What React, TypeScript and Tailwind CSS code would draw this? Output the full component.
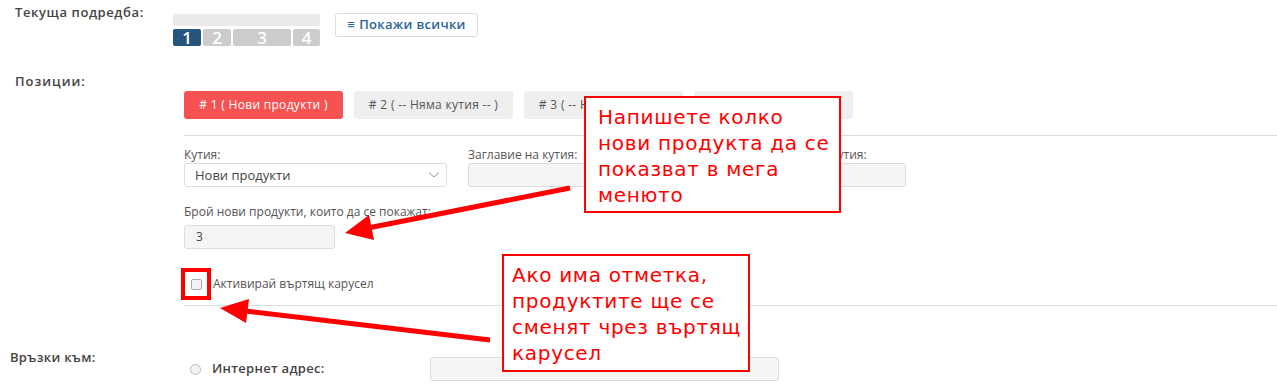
import React from "react";

const tabs = [
  "# 1 ( Нови продукти )",
  "# 2 ( -- Няма кутия -- )",
  "# 3 ( -- Няма кутия -- )",
  "# 4 ( -- Няма кутия -- )",
];

const App = () => {
  return (
    <div className="relative w-[1277px] h-[388px] overflow-hidden bg-white font-['Open_Sans',sans-serif] text-[#444]">
      {/* current layout */}
      <div className="flex pt-[3px] pl-[15px] h-[60px]">
        <div className="w-[158px] text-[13px] font-semibold tracking-[0.6px] leading-[18px]">
          Текуща подредба:
        </div>
        <div className="mt-[11px] w-[147px]">
          <div className="h-[12px] bg-[#ebebeb]" />
          <div className="mt-[3px] flex gap-[2px] h-[17px] text-white text-[17px] leading-[17px] font-semibold">
            <div className="w-[28px] bg-[#26547c] rounded-[2px] flex items-center justify-center">1</div>
            <div className="w-[28px] bg-[#cccccc] rounded-[2px] flex items-center justify-center">2</div>
            <div className="w-[58px] bg-[#cccccc] rounded-[2px] flex items-center justify-center">3</div>
            <div className="w-[27px] bg-[#cccccc] rounded-[2px] flex items-center justify-center">4</div>
          </div>
        </div>
        <button className="ml-[15px] mt-[10px] h-[24px] w-[143px] border border-[#dddddd] rounded-[3px] text-[13px] font-semibold tracking-[0.3px] text-[#2a6496] flex items-center justify-center">
          <span className="font-normal mr-[4px]">≡</span>Покажи всички
        </button>
      </div>

      {/* positions */}
      <div className="flex pl-[15px] mt-[12px]">
        <div className="w-[169px] text-[13px] font-semibold tracking-[1px] leading-[18px]">
          Позиции:
        </div>
        <div className="flex-1 pt-[19px]">
          <div className="flex gap-[11px]">
            {tabs.map((t, i) => (
              <div
                key={t}
                className={
                  i === 0
                    ? "w-[159px] h-[28px] rounded-[3px] bg-[#f65252] text-white text-[12px] tracking-[0.3px] flex items-center justify-center"
                    : "w-[159px] h-[28px] rounded-[3px] bg-[#efefef] text-[#555] text-[12px] tracking-[0.3px] flex items-center justify-center"
                }
              >
                {t}
              </div>
            ))}
          </div>
          <div className="mt-[16px] border-t border-[#dddddd]" />

          <div className="mt-[11px] flex text-[12px] leading-[16px] text-[#555]">
            <div className="w-[284px]">
              <div>Кутия:</div>
              <div className="w-[263px] h-[24px] border border-[#dddddd] rounded-[3px] flex items-center justify-between pl-[10px] pr-[6px] text-[13px] text-[#444]">
                <span>Нови продукти</span>
                <svg width="12" height="8" viewBox="0 0 12 8">
                  <path d="M1 1.5 L6 6 L11 1.5" fill="none" stroke="#999" strokeWidth="1" />
                </svg>
              </div>
            </div>
            <div className="w-[284px]">
              <div>Заглавие на кутия:</div>
              <div className="w-[263px] h-[24px] border border-[#dddddd] rounded-[3px] bg-[#f5f5f5]" />
            </div>
            <div className="w-[284px]">
              <div>Описание на кутия:</div>
              <div className="w-[154px] h-[24px] border border-[#dddddd] rounded-[3px] bg-[#f5f5f5]" />
            </div>
          </div>

          <div className="mt-[17px] text-[12px] leading-[16px] text-[#555]">
            Брой нови продукти, които да се покажат:
          </div>
          <div className="mt-[5px] w-[151px] h-[24px] border border-[#dddddd] rounded-[3px] bg-[#f5f5f5] flex items-center pl-[11px] text-[12px] text-[#444]">
            3
          </div>

          <div className="mt-[19px] flex items-center h-[32px]">
            <div className="-ml-[3px] w-[30px] h-[32px] border-[4px] border-[#ff0000] flex items-center justify-center">
              <div className="w-[11px] h-[11px] border border-[#aaa] rounded-[2px] bg-[#f3f3f3]" />
            </div>
            <span className="ml-[2px] text-[12px] text-[#555]">Активирай въртящ карусел</span>
          </div>
          <div className="mt-[5px] border-t border-[#dddddd]" />
        </div>
      </div>

      {/* links */}
      <div className="flex pl-[10px] mt-[42px]">
        <div className="w-[175px] text-[13px] font-semibold tracking-[0.3px] leading-[18px]">
          Връзки към:
        </div>
        <div className="flex items-center mt-[9px]">
          <div className="ml-[5px] w-[11px] h-[11px] rounded-full border border-[#bbb] bg-[#f3f3f3]" />
          <div className="ml-[11px] w-[218px] text-[13px] font-semibold tracking-[0.3px]">Интернет адрес:</div>
          <div className="w-[349px] h-[24px] border border-[#dddddd] rounded-[3px] bg-[#f5f5f5]" />
        </div>
      </div>

      {/* annotations */}
      <svg className="absolute left-0 top-0 pointer-events-none" width="1277" height="388">
        <line x1="570" y1="188" x2="368" y2="228" stroke="#ff0000" strokeWidth="5" />
        <polygon points="345,233 369,215 374,240" fill="#ff0000" />
        <line x1="490" y1="340" x2="245" y2="311" stroke="#ff0000" strokeWidth="5" />
        <polygon points="220,308 249,299 246,323" fill="#ff0000" />
      </svg>

      <div className="absolute left-[584px] top-[96px] w-[257px] h-[117px] border-2 border-[#ff0000] bg-white pl-[12px] pt-[6px] font-['DejaVu_Sans',sans-serif] text-[20px] leading-[26px] text-[#ff0000] tracking-[0.7px]">
        Напишете колко
        <br />
        нови продукта да се
        <br />
        показват в мега
        <br />
        менюто
      </div>

      <div className="absolute left-[502px] top-[254px] w-[248px] h-[118px] border-2 border-[#ff0000] bg-white pl-[8px] pt-[6px] font-['DejaVu_Sans',sans-serif] text-[20px] leading-[26px] text-[#ff0000] tracking-[0.7px]">
        Ако има отметка,
        <br />
        продуктите ще се
        <br />
        сменят чрез въртящ
        <br />
        карусел
      </div>
    </div>
  );
};

export default App;
